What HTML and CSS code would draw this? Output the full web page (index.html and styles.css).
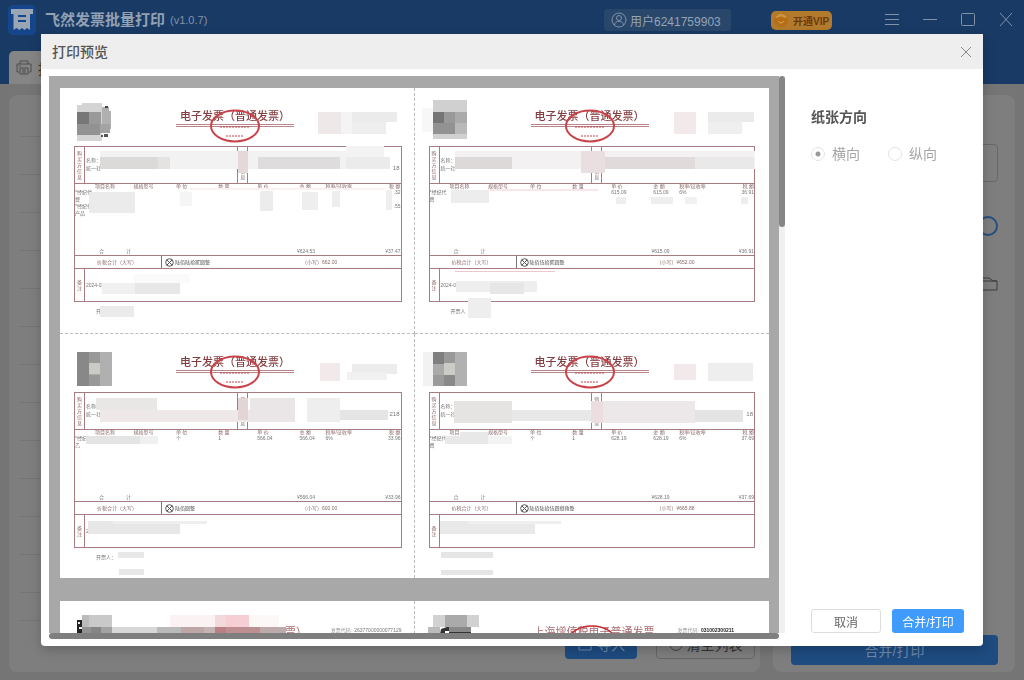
FILE: index.html
```html
<!DOCTYPE html>
<html lang="zh-CN">
<head>
<meta charset="utf-8">
<meta name="viewport" content="width=device-width, initial-scale=1">
<title>飞然发票批量打印</title>
<link rel="stylesheet" href="styles.css">
</head>
<body>
<div class="app">
  <header class="topbar">
    <svg class="logo" viewBox="0 0 28 30" aria-hidden="true">
      <rect x="0" y="0" width="28" height="30" rx="5" fill="#15458a"/>
      <path d="M3 4h22v5h-3v16l-3-2-2.500 2-2.500-2-2.500 2-3-2-3 2V9H3z" fill="#9aa5b5"/>
      <path d="M10 11h8M10 16h8" stroke="#15458a" stroke-width="2"/>
    </svg>
    <h1 class="app-name">飞然发票批量打印</h1>
    <span class="version">(v1.0.7)</span>
    <button class="user" type="button">
      <svg width="16" height="16" viewBox="0 0 16 16" fill="none" stroke="#8293aa" aria-hidden="true"><circle cx="8" cy="8" r="7"/><circle cx="8" cy="6" r="2.500"/><path d="M3.500 13c.5-5 8.500-5 9 0"/></svg>
      用户6241759903
    </button>
    <button class="vip" type="button">
      <svg width="16" height="16" viewBox="0 0 16 16" aria-hidden="true"><circle cx="8" cy="8" r="7" fill="#b76c16"/><path d="M2 5q6-7 12 0l-2 1q-4-3-8 0z" fill="#c9963f"/><path d="M5 9q3 4 6 0" fill="none" stroke="#d8a763"/></svg>
      开通VIP
    </button>
    <nav class="window-tools">
      <button type="button" aria-label="菜单"><svg viewBox="0 0 14 14"><path d="M0 1.500h14M0 6.500h14M0 11.500h14"/></svg></button>
      <button type="button" aria-label="最小化"><svg viewBox="0 0 14 14"><path d="M0 6.500h14"/></svg></button>
      <button type="button" aria-label="最大化"><svg viewBox="0 0 14 14"><rect x=".5" y=".5" width="13" height="12" rx="1"/></svg></button>
      <button type="button" aria-label="关闭"><svg viewBox="0 0 14 14"><path d="M1 0l12 13M13 0L1 13"/></svg></button>
    </nav>
  </header>
  <div class="tabs">
    <button class="tab" type="button">
      <svg width="16" height="16" viewBox="0 0 16 16" fill="none" stroke="#4c4c4c" aria-hidden="true"><path d="M4 4V1h8v3M3 12H1V4h14v8h-2M4 8h8v6H4zM6 10h4M6 12h4M2.500 6h2"/></svg>
      批量打印
    </button>
  </div>
  <main class="workspace">
    <section class="panel list-panel">
      <div class="rows"><i></i><i></i><i></i><i></i><i></i><i></i><i></i><i></i><i></i><i></i><i></i><i></i><i></i><i></i></div>
      <div class="list-actions">
        <button class="back-button primary" type="button"><svg width="16" height="16" viewBox="0 0 16 16" fill="none" stroke="#6f8aae" aria-hidden="true"><path d="M5 4H2v10h12V4h-3M8 1v8M5 6l3 3 3-3"/></svg>导入</button>
        <button class="back-button plain" type="button"><svg width="14" height="14" viewBox="0 0 14 14" fill="none" stroke="#444" aria-hidden="true"><path d="M3 3a6 6 0 1 0 8 0M7 1v5"/></svg>清空列表</button>
      </div>
    </section>
    <section class="panel settings-panel">
      <input class="back-input" type="text" aria-label="打印设置">
      <svg class="knob" width="20" height="20" viewBox="0 0 20 20" fill="none" stroke="#244d80" stroke-width="2" aria-hidden="true"><circle cx="10" cy="10" r="9"/></svg>
      <svg class="folder" width="18" height="14" viewBox="0 0 18 14" fill="none" stroke="#3d3d3d" aria-hidden="true"><path d="M1 13V1h8l4 3h4v9zM1 4h16"/></svg>
      <button class="back-button primary wide" type="button">合并/打印</button>
    </section>
  </main>
</div>

<div class="overlay">
  <section class="dialog" role="dialog" aria-labelledby="dialog-title">
    <header class="dialog-head">
      <h2 class="dialog-title" id="dialog-title">打印预览</h2>
      <button class="dialog-close" type="button" aria-label="关闭预览"><svg width="12" height="12" viewBox="0 0 12 12" stroke="#888" fill="none"><path d="M1 1l10 10M11 1L1 11"/></svg></button>
    </header>
    <div class="dialog-body">
      <div class="preview">
        <div class="viewport">
          <div class="sheet" id="sheet-one"></div>
          <div class="sheet">
            <article class="invoice late">
              <p class="late-title first">票）</p>
              <p class="late-code">发票代码:<b>26377000000077129</b></p>
              <svg class="marks" width="354" height="60" viewBox="0 0 354 60" aria-hidden="true">
                <path d="M17 19h5v14h-5z" fill="#222"/><path d="M18 21h2v2h-2zM19 26h3v2h-3z" fill="#eee"/>
                <path d="M22 14h30v12H22z" fill="#c9c9c9"/><path d="M22 14h7v12h-7z" fill="#bbb"/><path d="M22 26h9v12h-9z" fill="#929292"/><path d="M31 26h10v12H31z" fill="#858585"/><path d="M41 26h11v12H41z" fill="#a2a2a2"/>
                <path d="M52 26h45v12H52z" fill="#d7d7d7"/><path d="M97 26h24v12H97z" fill="#bababa"/><path d="M121 26h23v12h-23z" fill="#bca6a6"/><path d="M144 26h11v12h-11z" fill="#c4b5b5"/>
                <path d="M110 14h45v12h-45z" fill="#faf2f3"/><path d="M155 14h11v12h-11z" fill="#f1d9dc"/><path d="M166 14h23v12h-23z" fill="#f5cfd4"/><path d="M155 26h11v12h-11z" fill="#b98184"/><path d="M166 26h34v12h-34z" fill="#bd8f91"/><path d="M200 26h26v12h-26z" fill="#bdaaaa"/><path d="M189 14h30v12h-30z" fill="#fcf8f8"/>
              </svg>
            </article>
            <article class="invoice late">
              <p class="late-title">上海增值税电子普通发票</p>
              <p class="late-code dark">发票代码:<b>031002300211</b></p>
              <svg class="marks" width="354" height="60" viewBox="0 0 354 60" aria-hidden="true">
                <path d="M18 14h46v12H18z" fill="#d2d2d2"/><path d="M30 14h22v12H30z" fill="#aaa"/><path d="M13 26h12v6H13z" fill="#bbb"/><path d="M26 28l6-2h24v12H24z" fill="#333"/><path d="M34 26h22v5H34z" fill="#888"/><path d="M30 30h4v2h-4zM42 32h7v2h-7z" fill="#fff"/>
                <ellipse cx="177" cy="41" rx="24" ry="16" fill="none" stroke="#c8282f" stroke-width="1.500"/>
              </svg>
            </article>
          </div>
        </div>
        <div class="scroll-track"><span class="scroll-thumb"></span></div>
        <div class="scroll-bottom"></div>
      </div>
      <aside class="options">
        <fieldset class="direction">
          <legend>纸张方向</legend>
          <div class="choices">
            <label><input type="radio" name="direction" checked>横向</label>
            <label><input type="radio" name="direction">纵向</label>
          </div>
        </fieldset>
        <div class="dialog-actions">
          <button class="action cancel" type="button">取消</button>
          <button class="action confirm" type="button">合并/打印</button>
        </div>
      </aside>
    </div>
  </section>
</div>
<script src="invoices.js"></script>
</body>
</html>
```

FILE: styles.css
```css
* { box-sizing: border-box; }
body, h1, h2, h3, p, fieldset { margin: 0; padding: 0; }
body {
  font-family: "Liberation Sans", "Noto Sans CJK SC", sans-serif;
  font-size: 14px;
  color: #555;
  background: #757575;
  overflow: hidden;
}
button, input { font: inherit; margin: 0; }
button { border: 0; background: none; padding: 0; color: inherit; white-space: nowrap; }
svg { display: block; flex: none; }
fieldset { border: 0; }

/* Dimmed application window */
.app { height: 100vh; display: flex; flex-direction: column; background: linear-gradient(#193a64 84px, #757575 84px); }
.topbar { display: flex; align-items: center; height: 40px; flex: none; padding: 0 11px 0 8px; color: #93a1b4; }
.logo { width: 28px; height: 30px; margin-right: 9px; }
.app-name { font-size: 15px; font-weight: 700; line-height: 20px; }
.version { font-size: 11px; margin: 0 auto 0 5px; color: #8293aa; }
.user { display: flex; align-items: center; gap: 3px; height: 22px; width: 127px; padding: 0 7px; border-radius: 3px; background: #28476b; color: #96a4b6; font-size: 12px; }
.vip { display: flex; align-items: center; gap: 4px; height: 19px; width: 61px; padding: 0 2px; margin: 0 53px 0 40px; border-radius: 5px; background: #b17a2d; color: #6b3a0e; font-size: 10px; font-weight: 700; }
.window-tools { display: flex; gap: 24px; }
.window-tools svg { width: 14px; height: 14px; stroke: #8293a9; fill: none; }
.tabs { display: flex; align-items: flex-end; height: 44px; flex: none; padding-left: 9px; }
.tab { display: flex; align-items: center; gap: 6px; height: 33px; width: 110px; padding-left: 7px; border-radius: 5px 5px 0 0; background: #858585; color: #333; }
.workspace { flex: 1; min-height: 0; display: grid; grid-template-columns: 1fr 242px; gap: 13px; padding: 11px 9px 8px; }
.panel { display: flex; flex-direction: column; border-radius: 8px; background: #7e7e7e; }
.list-panel { padding: 4px 5px 13px 10px; }
.rows i { display: block; height: 38px; border-bottom: 1px solid #747474; }
.rows i:last-child { height: 28px; }
.list-actions { display: flex; justify-content: flex-end; gap: 19px; margin-top: auto; }
.back-button { display: flex; align-items: center; justify-content: center; gap: 4px; height: 30px; border-radius: 4px; }
.primary { width: 72px; background: #1e4b80; color: #6f8aae; }
.plain { width: 99px; border: 1px solid #666; color: #333; }
.settings-panel { align-items: flex-end; padding: 49px 17px 7px 18px; }
.back-input { width: 100%; height: 38px; border: 1px solid #686868; border-radius: 4px; background: none; }
.knob { margin-top: 34px; }
.folder { margin-top: 41px; }
.wide { width: 100%; margin-top: auto; }

/* Preview dialog */
.overlay { position: fixed; inset: 0; display: flex; padding: 34px 41px; }
.dialog { flex: 1; min-width: 0; display: flex; flex-direction: column; border-radius: 0 0 4px 4px; background: #fff; overflow: hidden; box-shadow: 0 4px 12px rgba(0, 0, 0, .2); }
.dialog-head { display: flex; align-items: center; justify-content: space-between; height: 35px; flex: none; padding: 0 11px; background: #eee; }
.dialog-title { font-size: 14px; line-height: 20px; font-weight: 500; color: #555; }
.dialog-body { flex: 1; min-height: 0; display: flex; padding: 7px 0 7px 8px; }
.preview { flex: 1; min-width: 0; display: grid; grid-template: minmax(0, 1fr) 6px / minmax(0, 1fr) 6px; }
.viewport { overflow: hidden; padding: 12px 10px 0 11px; background: #a8a8a8; }
.scroll-track { background: #f0f0f0; }
.scroll-thumb { display: block; height: 151px; border-radius: 3px; background: #868686; }
.scroll-bottom { border-radius: 3px; background: #7f7f7f; }
.options { width: 198px; flex: none; display: flex; flex-direction: column; justify-content: space-between; padding: 31px 19px 6px 26px; }
.direction legend { padding: 0; font-size: 14px; line-height: 20px; font-weight: 700; color: #555; }
.choices { display: flex; gap: 28px; margin-top: 17px; }
.choices label { display: flex; align-items: center; gap: 7px; line-height: 20px; color: #a6a6a6; }
.choices input { appearance: none; width: 14px; height: 14px; border: 1px solid #e2e2e2; border-radius: 50%; background: #fff; }
.choices input:checked { background: radial-gradient(circle, #999 2px, #fff 3px); }
.dialog-actions { display: grid; grid-template-columns: 70fr 72fr; gap: 11px; }
.action { height: 24px; border-radius: 3px; font-size: 12px; }
.cancel { border: 1px solid #ddd; background: #fff; color: #666; }
.confirm { background: #409bff; color: #fff; }

/* Printed sheets */
.sheet { display: grid; grid-template-columns: 1fr 1fr; margin-bottom: 23px; background: #fff; }
.invoice { position: relative; height: 246px; padding: 20px 14px 0; font-size: 5px; line-height: 8px; color: #777; }
.invoice:nth-child(odd) { border-right: 1px dashed #bbb; padding-right: 12px; }
.invoice:nth-child(-n+2) { border-bottom: 1px dashed #bbb; }
.invoice:nth-child(n+3) { height: 244px; }
.invoice-title { display: flex; justify-content: center; width: 118px; height: 19px; margin: 0 0 19px 102px; border-bottom: 3px double #b98488; color: #843d40; font-size: 11px; line-height: 16px; font-weight: 500; white-space: nowrap; }
.form { border: 1px solid #a87b80; color: #8a6a6a; }
.form > div + div { border-top: 1px solid #a87b80; }
.parties { display: grid; grid-template-columns: 10px 1fr 11px 1fr; height: 36px; }
.side { display: flex; flex-direction: column; align-items: center; justify-content: center; border-right: 1px solid #a87b80; line-height: 6px; }
.side span { display: block; }
.party { padding: 9px 1px; color: #777; white-space: nowrap; }
.party + .side { border-left: 1px solid #a87b80; }
.party-end { padding-top: 17px; text-align: right; font-size: 6px; }
.goods { width: 100%; border-collapse: collapse; table-layout: fixed; }
.goods-area { height: 72px; display: flex; flex-direction: column; justify-content: space-between; }
.goods th, .goods td { padding: 0; font-weight: 400; text-align: left; white-space: nowrap; vertical-align: top; line-height: 7px; }
.goods th { line-height: 5px; }
.goods td { color: #777; }
.goods th:first-child { padding-left: 20px; }
.goods th:last-child, .goods td:last-child { text-align: right; }
.sum { display: grid; grid-template-columns: 27px 171px 1fr auto; padding-left: 24px; color: #777; }
.total { display: grid; grid-template-columns: 87px 140px 1fr; height: 13px; }
.total > span { display: flex; align-items: center; white-space: nowrap; }
.total > span:first-child { padding-left: 22px; border-right: 1px solid #777; }
.total > .words { gap: 1px; padding-left: 3px; color: #555; }
.note { display: grid; grid-template-columns: 10px 1fr; height: 33px; }
.note p { padding: 12px 1px; color: #777; }
.payee { padding: 5px 0 0 22px; }
.marks { position: absolute; left: 0; top: 0; }
.late { display: flex; justify-content: space-between; padding: 22px 35px 0 119px; }
.late-title { font-size: 11px; line-height: 18px; color: #a96c70; white-space: nowrap; }
.late-title.first { margin-left: 106px; }
.late:first-child { padding-right: 12px; }
.late-code { display: flex; gap: 2px; line-height: 15px; color: #999; white-space: nowrap; }
.late-code b { font-weight: 400; color: #777; }
.late-code.dark b { color: #222; font-weight: 700; }
```

FILE: invoices.js
```js
// Each mask is [x, y, width, height, grey or tinted fill].
const invoices = [
  { buyer: ["名称：", "统一社"], end: "18", spec: "项目名称",
    lines: [["*经纪代", "", "", "", "", "", "", ".32"], ["费"], ["*经纪代", "", "", "", "", "", "", ".55"], ["产品"]],
    sum: ["¥624.53", "¥37.47"], words: "陆佰陆拾贰圆整", small: "662.00", note: "2024-02", payee: "开",
    masks: [[17,17,25,36,"#d4d4d4"],[22,15,20,3,"#d4d4d4"],[42,19,7,26,"#b0b0b0"],[49,23,2,18,"#b0b0b0"],[17,24,12,12,"#777"],[29,24,12,12,"#999"],[17,36,23,11,"#929292"],[40,36,10,9,"#a3a3a3"],[45,18,3,2,"#444"],[41,47,2,2,"#555"],[44,46,4,3,"#555"],
      [258,24,23,22,"#eee8e8"],[281,24,11,22,"#f4f4f4"],[292,24,45,10,"#ebebeb"],[292,34,34,12,"#eee"],
      [40,63,246,18,"#f3f2f2"],[40,69,58,12,"#dcd9d9"],[98,69,12,12,"#e5e2e2"],[178,63,10,22,"#e4d8d9"],[198,69,82,12,"#dedcdc"],[286,58,38,12,"#f4f3f3"],[286,69,44,12,"#ebebeb"],
      [29,104,46,21,"#ebebeb"],[120,104,12,14,"#f5f5f5"],[200,103,13,20,"#ececec"],[242,104,16,18,"#eee"],[272,103,8,16,"#eee"],[326,102,6,20,"#eee"],[130,100,195,2,"#fbf1f1"],
      [42,195,33,11,"#f0f0f0"],[75,195,45,11,"#e7e7e7"],[74,186,56,9,"#fafafa"],[40,218,34,11,"#ebebeb"]] },
  { buyer: ["名称：", "统一社"], end: "", spec: "项目名称",
    lines: [["*经纪代", "", "", "", "615.09", "615.09", "6%", "36.91"], ["费"]],
    sum: ["¥615.09", "¥36.91"], words: "陆佰伍拾贰圆整", small: "¥652.00", note: "2024-0", payee: "开票人",
    masks: [[7,20,12,24,"#f7f7f7"],[18,12,34,39,"#d0d0d0"],[18,24,11,11,"#757575"],[29,24,11,22,"#999"],[40,24,12,11,"#aaa"],[18,35,22,11,"#929292"],[40,35,12,11,"#b9b9b9"],
      [259,24,22,22,"#f1e9ea"],[293,24,46,10,"#ebebeb"],[293,34,34,12,"#efefef"],
      [40,63,300,18,"#f3f1f1"],[40,69,57,12,"#ded9d9"],[166,63,24,22,"#e9dfe0"],[190,69,90,12,"#e0dada"],[280,69,59,12,"#e9e9e9"],
      [36,102,38,13,"#ededed"],[75,101,108,2,"#f8e7e8"],[201,109,10,7,"#eee"],[236,109,22,7,"#eee"],[270,109,12,7,"#f1f1f1"],[326,109,7,7,"#eee"],
      [40,183,100,1,"#e9c9cc"],[41,193,81,11,"#eee"],[75,195,34,11,"#e6e6e6"],[53,210,23,20,"#eee"]] },
  { buyer: ["名称：", "统一社"], end: "218", spec: "项目名称",
    lines: [["*经纪", "", "个", "1", "566.04", "566.04", "6%", "33.96"], ["乙"]],
    sum: ["¥566.04", "¥33.96"], words: "陆佰圆整", small: "600.00", note: "20", payee: "开票人：",
    masks: [[17,18,35,34,"#ababab"],[17,18,12,34,"#888"],[29,29,11,11,"#cbcbc5"],[40,18,12,34,"#b0b0b0"],[29,18,11,11,"#999"],[29,41,11,11,"#989898"],
      [260,29,20,18,"#f2e9ea"],[292,30,45,10,"#ececec"],[287,38,40,8,"#f1f1f1"],
      [36,64,61,12,"#e9e6e6"],[40,76,160,12,"#eee8e9"],[178,64,10,22,"#e3d4d6"],[190,64,45,24,"#eae5e6"],[247,64,33,24,"#eee"],[280,76,48,10,"#e5e5e5"],
      [26,102,54,8,"#e4e4e4"],[80,102,18,8,"#f0f0f0"],[28,187,92,13,"#e7e7e7"],[53,187,94,3,"#eee"],[58,218,26,6,"#e8e8e8"],[59,235,25,6,"#e8e8e8"]] },
  { buyer: ["名称：", "统一社"], end: "18", spec: "项目",
    lines: [["*经纪代", "", "个", "1", "628.19", "628.19", "6%", "37.69"], ["费"]],
    sum: ["¥628.19", "¥37.69"], words: "陆佰陆拾伍圆捌角整", small: "¥665.88", note: "2", payee: "",
    masks: [[8,18,10,34,"#f2f2f2"],[18,18,34,34,"#aaa"],[18,18,11,12,"#7f7f7f"],[29,18,11,11,"#999"],[29,29,11,12,"#ccccc6"],[18,41,11,11,"#9b9b9b"],[29,41,11,11,"#898989"],[40,18,12,34,"#b1b1b1"],
      [259,30,22,16,"#f2e9ea"],[293,29,45,18,"#eee"],
      [39,67,58,22,"#e6e3e3"],[97,76,80,11,"#e9e8e8"],[176,67,12,22,"#ecdde0"],[188,67,92,22,"#ece7e8"],[280,76,48,12,"#e4e4e4"],
      [45,98,28,11,"#e8e8e8"],[30,102,43,8,"#e8e8e8"],[73,102,24,8,"#f3f3f3"],[25,187,95,13,"#e9e9e9"],[53,187,93,3,"#efefef"],[26,218,52,6,"#e5e5e5"],[26,236,52,5,"#e5e5e5"]] }
];

const headings = ["规格型号", "单 位", "数 量", "单 价", "金 额", "税率/征收率", "税 额"];
const widths = [18, 13, 13, 12, 13, 8, 13, 10];
const stack = text => [...text].map(char => `<span>${char}</span>`).join("");

function invoiceMarkup(item) {
  const rows = item.lines.map(line => `<tr>${widths.map((_, i) => `<td>${line[i] || ""}</td>`).join("")}</tr>`).join("");
  const masks = item.masks.map(([x, y, w, h, fill]) => `<rect x="${x}" y="${y}" width="${w}" height="${h}" fill="${fill}"/>`).join("");
  return `<article class="invoice">
    <h3 class="invoice-title">电子发票（普通发票）</h3>
    <div class="form">
      <div class="parties"><div class="side">${stack("购买方信息")}</div><div class="party">${item.buyer.join("<br>")}</div><div class="side">${stack("销售方信息")}</div><div class="party party-end">${item.end}</div></div>
      <div class="goods-area">
        <table class="goods"><colgroup>${widths.map(w => `<col style="width:${w}%">`).join("")}</colgroup>
          <thead><tr><th>${item.spec}</th>${headings.map(h => `<th>${h}</th>`).join("")}</tr></thead><tbody>${rows}</tbody></table>
        <div class="sum"><span>合</span><span>计</span><span>${item.sum[0]}</span><span>${item.sum[1]}</span></div>
      </div>
      <div class="total"><span>价税合计（大写）</span><span class="words"><svg width="9" height="9" viewBox="0 0 9 9" fill="none" stroke="#555"><circle cx="4.500" cy="4.500" r="3.800"/><path d="M2 2l5 5M7 2L2 7"/></svg>${item.words}</span><span>（小写）${item.small}</span></div>
      <div class="note"><div class="side">${stack("备注")}</div><p>${item.note}</p></div>
    </div>
    <p class="payee">${item.payee}</p>
    <svg class="marks" width="354" height="244" viewBox="0 0 354 244" aria-hidden="true">${masks}
      <g fill="none" stroke="#c8444a"><ellipse cx="175" cy="38" rx="24" ry="15.500" stroke-width="2"/><path d="M160 39h29M166 48h18" stroke-width="2" stroke-dasharray="2 1" opacity=".5"/></g>
    </svg>
  </article>`;
}

document.getElementById("sheet-one").innerHTML = invoices.map(invoiceMarkup).join("");
```
